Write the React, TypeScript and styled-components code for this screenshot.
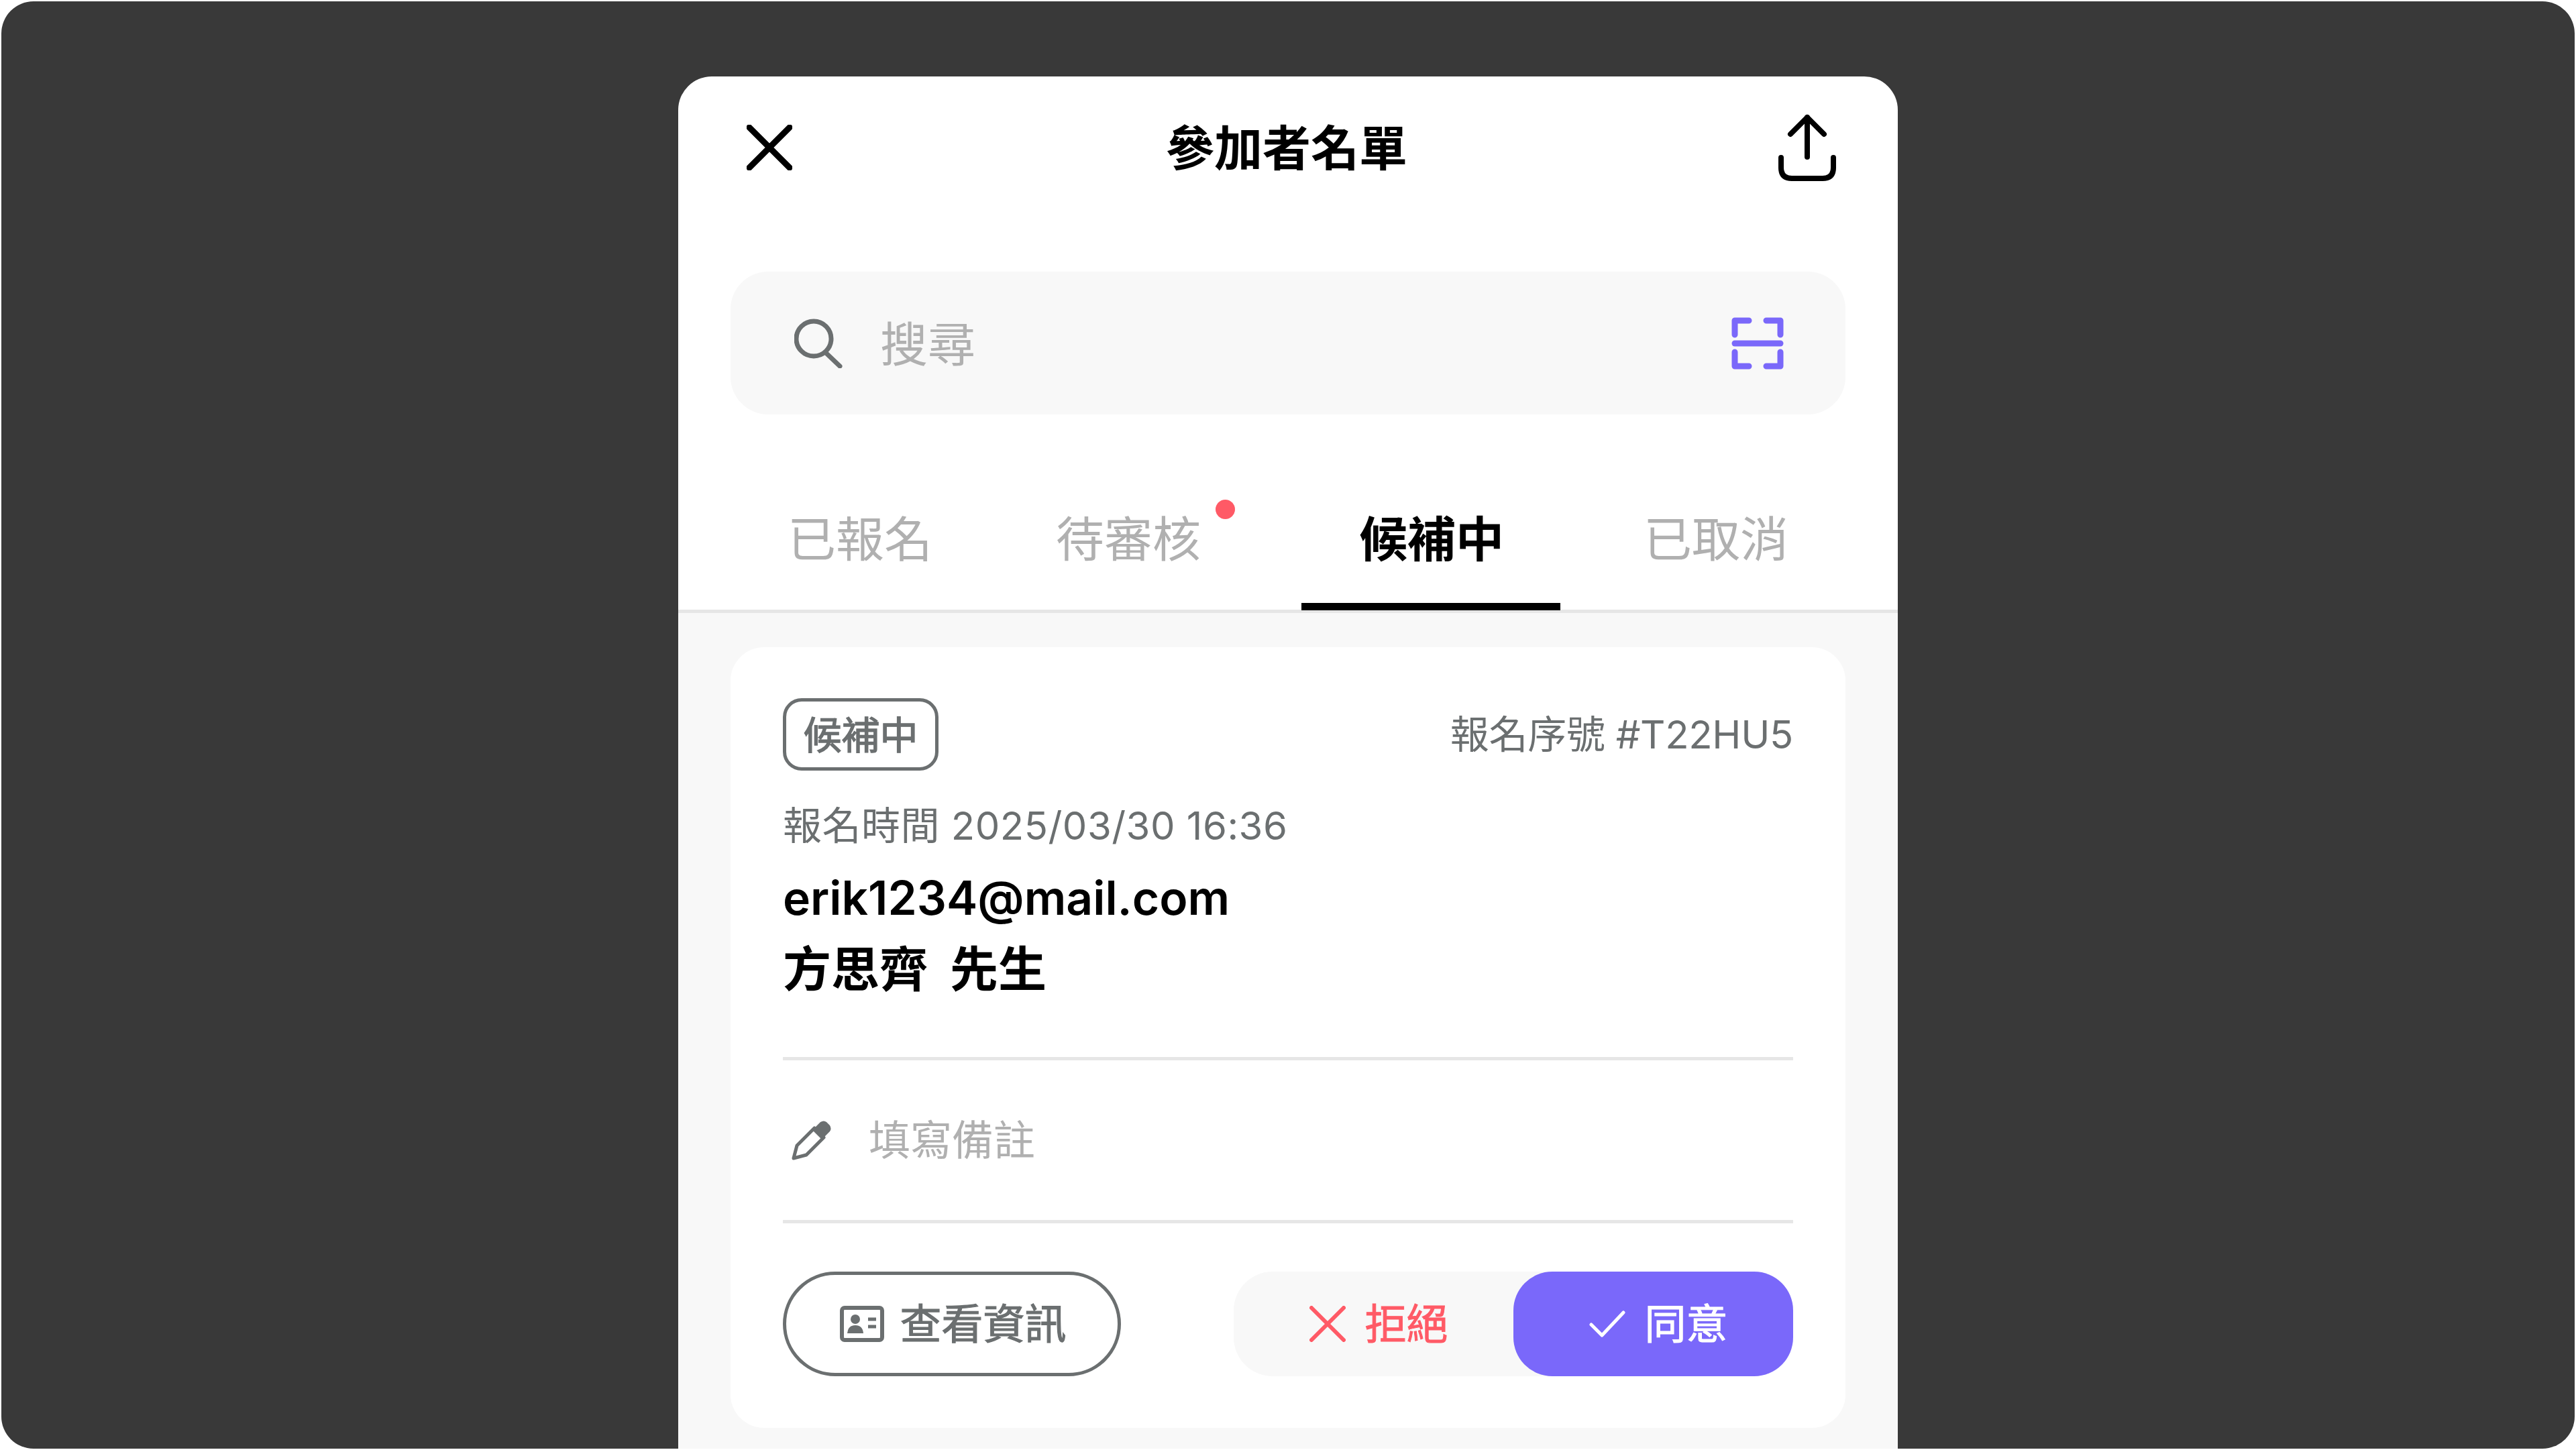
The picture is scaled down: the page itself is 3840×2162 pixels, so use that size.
import React from 'react';
import styled, {createGlobalStyle} from 'styled-components';

const ink = '#000000';
const grey = '#6b6f70';
const faint = '#b0b0b0';
const line = '#e6e6e6';
const paper = '#f8f8f8';
const violet = '#7a68fa';
const red = '#ff5a66';

const GlobalStyle = createGlobalStyle`
  html, body {
    margin: 0;
    padding: 0;
    background: #ffffff;
    font-family: "Inter", "Noto Sans CJK TC", sans-serif;
  }
`;

const tabs = [
    {label: '已報名', width: 385, pad: 85},
    {label: '待審核', width: 466, pad: 100, dot: true},
    {label: '候補中', width: 386, pad: 86, active: true},
    {label: '已取消', width: 425, pad: 124},
];

function App() {
    return (
        <Frame>
            <GlobalStyle/>
            <Sheet>
                <Header>
                    <CloseIcon/>
                    <Title>參加者名單</Title>
                    <ShareIcon/>
                </Header>

                <SearchBar>
                    <SearchIcon/>
                    <SearchText>搜尋</SearchText>
                    <ScanIcon/>
                </SearchBar>

                <TabBar>
                    {tabs.map(({label, width, pad, dot, active}) => (
                        <Tab key={label} $width={width} $pad={pad} $active={!!active}>
                            {label}
                            {dot && <Dot/>}
                        </Tab>
                    ))}
                </TabBar>

                <Content>
                    <Card>
                        <TopRow>
                            <Badge>候補中</Badge>
                            <Serial>報名序號 #T22HU5</Serial>
                        </TopRow>
                        <TimeRow>報名時間 2025/03/30 16:36</TimeRow>
                        <Email>erik1234@mail.com</Email>
                        <Name>方思齊 先生</Name>
                        <NoteRow>
                            <PencilIcon/>
                            <NoteText>填寫備註</NoteText>
                        </NoteRow>
                        <Actions>
                            <InfoButton>
                                <IdIcon/>
                                <Label>查看資訊</Label>
                            </InfoButton>
                            <Segment>
                                <Reject>
                                    <RejectIcon/>
                                    <Label>拒絕</Label>
                                </Reject>
                                <Accept>
                                    <AcceptIcon/>
                                    <Label>同意</Label>
                                </Accept>
                            </Segment>
                        </Actions>
                    </Card>
                </Content>
            </Sheet>
        </Frame>
    );
}

const CloseIcon = () => (
    <svg width="68" height="68" viewBox="0 0 68 68" fill="none">
        <path d="M4 4 L64 64 M64 4 L4 64" stroke={ink} strokeWidth="9" strokeLinecap="round"/>
    </svg>
);

const ShareIcon = () => (
    <svg width="86" height="100" viewBox="0 0 86 100" fill="none" stroke={ink} strokeWidth="8" strokeLinecap="round" strokeLinejoin="round">
        <path d="M43 5 V64"/>
        <path d="M18 30 L43 5 L68 30"/>
        <path d="M4 65 V80 Q4 96 20 96 H66 Q82 96 82 80 V65"/>
    </svg>
);

const SearchIcon = () => (
    <svg width="72" height="74" viewBox="0 0 72 74" fill="none" stroke={grey} strokeWidth="7" strokeLinecap="round">
        <circle cx="29" cy="30" r="26"/>
        <path d="M47 51 L68 71"/>
    </svg>
);

const ScanIcon = () => (
    <svg width="78" height="80" viewBox="0 0 78 80" fill="none" stroke={violet} strokeWidth="9" strokeLinecap="round" strokeLinejoin="round">
        <path d="M5 27 V6 H26"/>
        <path d="M52 6 H73 V27"/>
        <path d="M5 40 H73"/>
        <path d="M5 53 V74 H26"/>
        <path d="M52 74 H73 V53"/>
    </svg>
);

const PencilIcon = () => (
    <svg width="60" height="60" viewBox="0 0 60 60" fill="none">
        <path d="M3 57 L8 38 L34 12 L48 26 L22 52 Z" stroke={grey} strokeWidth="5" strokeLinejoin="round"/>
        <path d="M31 15 L43 3 Q48 0 52 3 L57 8 Q60 13 57 17 L45 29 Z" fill={grey}/>
    </svg>
);

const IdIcon = () => (
    <svg width="66" height="54" viewBox="0 0 66 54" fill="none">
        <rect x="3" y="3" width="60" height="48" rx="4" stroke={grey} strokeWidth="6"/>
        <circle cx="23" cy="20" r="7" fill={grey}/>
        <path d="M11 41 Q12 29 23 29 Q34 29 35 41 Z" fill={grey}/>
        <path d="M42 20 H54 M42 31 H54" stroke={grey} strokeWidth="5"/>
    </svg>
);

const RejectIcon = () => (
    <svg width="54" height="54" viewBox="0 0 54 54" fill="none">
        <path d="M3 3 L51 51 M51 3 L3 51" stroke={red} strokeWidth="6" strokeLinecap="round"/>
    </svg>
);

const AcceptIcon = () => (
    <svg width="54" height="40" viewBox="0 0 54 40" fill="none">
        <path d="M3 21 L19 37 L51 3" stroke="#ffffff" strokeWidth="5" strokeLinecap="round" strokeLinejoin="round"/>
    </svg>
);

const Frame = styled.div`
  margin: 2px;
  width: 3836px;
  height: 2158px;
  background: #393939;
  border-radius: 48px;
  overflow: hidden;
  display: flex;
  justify-content: center;
`;

const Sheet = styled.div`
  width: 1818px;
  margin-top: 112px;
  background: #ffffff;
  border-radius: 50px 50px 0 0;
  display: flex;
  flex-direction: column;
`;

const Header = styled.div`
  height: 212px;
  flex-shrink: 0;
  padding: 0 92px 0 102px;
  display: grid;
  grid-template-columns: 1fr auto 1fr;
  align-items: center;

  svg:last-child {
    justify-self: end;
  }
`;

const Title = styled.h1`
  margin: 2px 14px 0 0;
  font-size: 72px;
  font-weight: 700;
  line-height: 1;
  color: ${ink};
`;

const SearchBar = styled.div`
  margin: 79px 78px 0;
  height: 213px;
  flex-shrink: 0;
  padding: 0 92px 0 95px;
  background: ${paper};
  border-radius: 56px;
  display: flex;
  align-items: center;
`;

const SearchText = styled.span`
  flex: 1;
  margin-left: 56px;
  padding-bottom: 8px;
  font-size: 71px;
  color: ${faint};
`;

const TabBar = styled.div`
  margin-top: 82px;
  padding: 0 78px;
  flex-shrink: 0;
  display: flex;
  border-bottom: 5px solid ${line};
`;

const Tab = styled.div<{$width: number; $pad: number; $active: boolean}>`
  position: relative;
  width: ${p => p.$width}px;
  height: 196px;
  padding: 0 0 13px ${p => p.$pad}px;
  box-sizing: content-box;
  margin-right: ${p => -p.$pad}px;
  display: flex;
  align-items: center;
  font-size: 72px;
  font-weight: ${p => (p.$active ? 700 : 400)};
  color: ${p => (p.$active ? ink : faint)};

  ${p => p.$active && `
    &::after {
      content: '';
      position: absolute;
      left: 0;
      right: ${p.$pad}px;
      bottom: -1px;
      height: 11px;
      background: ${ink};
    }
  `}
`;

const Dot = styled.span`
  position: absolute;
  left: 338px;
  top: 45px;
  width: 29px;
  height: 29px;
  border-radius: 50%;
  background: ${red};
`;

const Content = styled.div`
  flex: 1;
  padding: 51px 78px 0;
  background: ${paper};
`;

const Card = styled.div`
  height: 1164px;
  box-sizing: border-box;
  padding: 76px 78px 0;
  background: #ffffff;
  border-radius: 50px;
`;

const TopRow = styled.div`
  display: flex;
  align-items: center;
  justify-content: space-between;
`;

const Badge = styled.div`
  width: 232px;
  height: 108px;
  padding-bottom: 6px;
  box-sizing: border-box;
  border: 5px solid ${grey};
  border-radius: 28px;
  display: flex;
  align-items: center;
  justify-content: center;
  font-size: 57px;
  -webkit-text-stroke: 1.4px ${grey};
  color: ${grey};
`;

const Serial = styled.div`
  margin-top: -8px;
  font-size: 58px;
  letter-spacing: -0.3px;
  color: ${grey};
`;

const TimeRow = styled.div`
  margin-top: 46px;
  font-size: 58px;
  line-height: 72px;
  letter-spacing: 0.5px;
  color: ${grey};
`;

const Email = styled.div`
  margin-top: 18px;
  font-size: 69.5px;
  line-height: 108px;
  font-weight: 600;
  color: ${ink};
`;

const Name = styled.div`
  font-size: 72px;
  line-height: 104px;
  font-weight: 700;
  word-spacing: 16px;
  color: ${ink};
`;

const NoteRow = styled.div`
  margin-top: 79px;
  height: 238px;
  padding-left: 13px;
  border-top: 5px solid ${line};
  border-bottom: 5px solid ${line};
  display: flex;
  align-items: center;
  gap: 55px;
`;

const NoteText = styled.span`
  padding-bottom: 8px;
  font-size: 62px;
  color: ${faint};
`;

const Actions = styled.div`
  margin-top: 72px;
  display: flex;
  justify-content: space-between;
`;

const Label = styled.span`
  padding-bottom: 8px;
`;

const InfoButton = styled.div`
  width: 504px;
  height: 156px;
  padding-left: 4px;
  box-sizing: border-box;
  border: 5px solid ${grey};
  border-radius: 78px;
  display: flex;
  align-items: center;
  justify-content: center;
  gap: 23px;
  font-size: 62px;
  -webkit-text-stroke: 1.2px ${grey};
  color: ${grey};
`;

const Segment = styled.div`
  width: 834px;
  height: 156px;
  background: ${paper};
  border-radius: 58px;
  display: flex;
`;

const Reject = styled.div`
  flex: 1;
  padding-left: 16px;
  display: flex;
  align-items: center;
  justify-content: center;
  gap: 28px;
  font-size: 62px;
  -webkit-text-stroke: 1px ${red};
  color: ${red};
`;

const Accept = styled(Reject)`
  flex: 0 0 417px;
  box-sizing: border-box;
  background: ${violet};
  border-radius: 58px;
  -webkit-text-stroke: 1px #ffffff;
  color: #ffffff;
`;

export default App;
